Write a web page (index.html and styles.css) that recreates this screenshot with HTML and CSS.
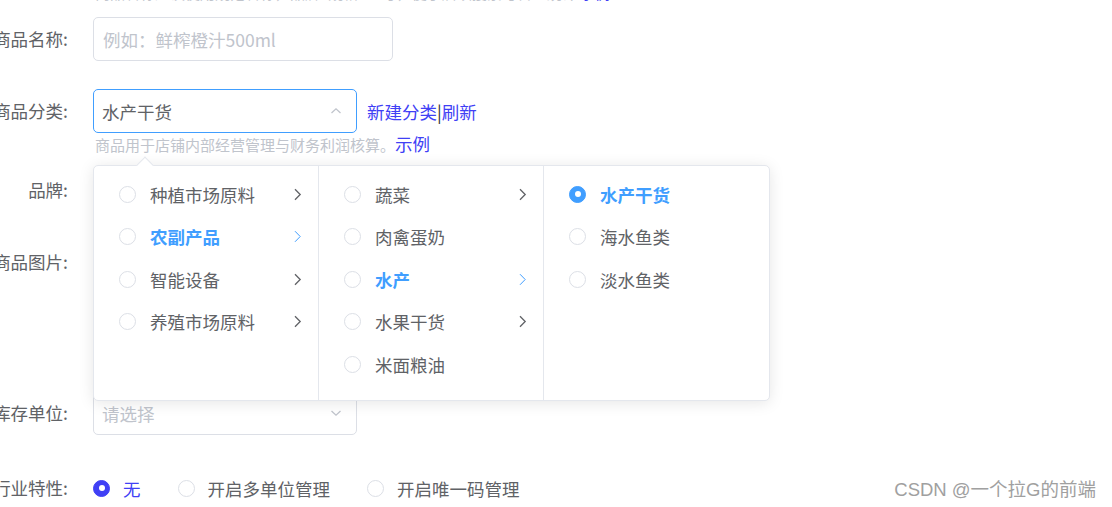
FILE: index.html
```html
<!DOCTYPE html>
<html lang="zh-CN">
<head>
    <meta charset="UTF-8">
    <meta name="viewport" content="width=device-width, initial-scale=1.0">
    <title>新建商品</title>
    <link rel="stylesheet" href="styles.css">
</head>
<body>
    <div class="page">
        <p class="top-tip">商品名称建议使用规范名称，品牌+规格+型号，便于后续搜索与管理统计 <a href="#">示例</a></p>

        <form class="goods-form">
            <div class="form-item">
                <label class="form-label">商品名称:</label>
                <div class="form-content">
                    <input class="input input-name" type="text" placeholder="例如：鲜榨橙汁500ml">
                </div>
            </div>

            <div class="form-item item-category">
                <label class="form-label">商品分类:</label>
                <div class="form-content">
                    <div class="category-line">
                        <div class="select is-focus">
                            <span class="select-value">水产干货</span>
                            <svg class="select-arrow" width="12" height="12" viewBox="0 0 12 12"><path d="M1.5 8 L6 3.8 L10.5 8" fill="none" stroke="#c0c4cc" stroke-width="1.3"/></svg>
                        </div>
                        <span class="links"><a href="#">新建分类</a>|<a href="#">刷新</a></span>
                    </div>
                    <div class="hint">商品用于店铺内部经营管理与财务利润核算。<a href="#">示例</a></div>

                    <!-- cascader dropdown -->
                    <div class="cascader">
                        <span class="popper-arrow"></span>
                        <ul class="menu">
                            <li class="menu-item"><span class="radio"></span><span class="label">种植市场原料</span><svg class="chev" width="9" height="13" viewBox="0 0 9 13"><path d="M2 1.2 L7.2 6.5 L2 11.8" /></svg></li>
                            <li class="menu-item is-active"><span class="radio"></span><span class="label">农副产品</span><svg class="chev" width="9" height="13" viewBox="0 0 9 13"><path d="M2 1.2 L7.2 6.5 L2 11.8" /></svg></li>
                            <li class="menu-item"><span class="radio"></span><span class="label">智能设备</span><svg class="chev" width="9" height="13" viewBox="0 0 9 13"><path d="M2 1.2 L7.2 6.5 L2 11.8" /></svg></li>
                            <li class="menu-item"><span class="radio"></span><span class="label">养殖市场原料</span><svg class="chev" width="9" height="13" viewBox="0 0 9 13"><path d="M2 1.2 L7.2 6.5 L2 11.8" /></svg></li>
                        </ul>
                        <ul class="menu">
                            <li class="menu-item"><span class="radio"></span><span class="label">蔬菜</span><svg class="chev" width="9" height="13" viewBox="0 0 9 13"><path d="M2 1.2 L7.2 6.5 L2 11.8" /></svg></li>
                            <li class="menu-item"><span class="radio"></span><span class="label">肉禽蛋奶</span></li>
                            <li class="menu-item is-active"><span class="radio"></span><span class="label">水产</span><svg class="chev" width="9" height="13" viewBox="0 0 9 13"><path d="M2 1.2 L7.2 6.5 L2 11.8" /></svg></li>
                            <li class="menu-item"><span class="radio"></span><span class="label">水果干货</span><svg class="chev" width="9" height="13" viewBox="0 0 9 13"><path d="M2 1.2 L7.2 6.5 L2 11.8" /></svg></li>
                            <li class="menu-item"><span class="radio"></span><span class="label">米面粮油</span></li>
                        </ul>
                        <ul class="menu">
                            <li class="menu-item is-active"><span class="radio is-checked"></span><span class="label">水产干货</span></li>
                            <li class="menu-item"><span class="radio"></span><span class="label">海水鱼类</span></li>
                            <li class="menu-item"><span class="radio"></span><span class="label">淡水鱼类</span></li>
                        </ul>
                    </div>
                </div>
            </div>

            <div class="form-item">
                <label class="form-label">品牌:</label>
                <div class="form-content">
                    <div class="select"><span class="select-placeholder">请选择</span></div>
                </div>
            </div>

            <div class="form-item">
                <label class="form-label">商品图片:</label>
                <div class="form-content">
                    <div class="upload-box">+</div>
                </div>
            </div>

            <div class="form-item">
                <label class="form-label">库存单位:</label>
                <div class="form-content">
                    <div class="select">
                        <span class="select-placeholder">请选择</span>
                        <svg class="select-arrow" width="12" height="12" viewBox="0 0 12 12"><path d="M1.5 4 L6 8.2 L10.5 4" fill="none" stroke="#c0c4cc" stroke-width="1.3"/></svg>
                    </div>
                </div>
            </div>

            <div class="form-item item-industry">
                <label class="form-label">行业特性:</label>
                <div class="form-content radio-group">
                    <label class="radio-option is-checked"><span class="radio"></span>无</label>
                    <label class="radio-option"><span class="radio"></span>开启多单位管理</label>
                    <label class="radio-option"><span class="radio"></span>开启唯一码管理</label>
                </div>
                <div class="watermark">CSDN @一个拉G的前端</div>
            </div>
        </form>
    </div>
</body>
</html>
```

FILE: styles.css
```css
* {
    margin: 0;
    padding: 0;
    box-sizing: border-box;
}

body {
    background: #fff;
    font-family: "Microsoft YaHei", "Noto Sans CJK SC", "Noto Sans", sans-serif;
    color: #606266;
    overflow: hidden;
}

a {
    color: #4040f5;
    text-decoration: none;
}

.page {
    padding-top: 1px;
}

.top-tip {
    margin-top: -18px;
    padding-left: 95px;
    font-size: 15px;
    line-height: 20px;
    color: #c0c4cc;
}

.goods-form {
    margin-left: -40px;
    padding-top: 14px;
}

.form-item {
    display: flex;
    margin-bottom: 28px;
}

.form-label {
    width: 133px;
    padding-right: 25px;
    text-align: right;
    font-size: 17.5px;
    line-height: 44px;
    color: #606266;
    flex-shrink: 0;
}

.form-content {
    position: relative;
    font-size: 17.5px;
}

.input {
    height: 44px;
    border: 1px solid #dcdfe6;
    border-radius: 5px;
    padding: 0 9px;
    font-size: 17.5px;
    font-family: inherit;
    color: #606266;
    outline: none;
}

.input::placeholder {
    color: #c0c4cc;
}

.input-name {
    width: 300px;
}

.category-line {
    display: flex;
    align-items: center;
}

.select {
    width: 264px;
    height: 44px;
    border: 1px solid #dcdfe6;
    border-radius: 5px;
    padding: 0 8px;
    display: flex;
    align-items: center;
    justify-content: space-between;
}

.select.is-focus {
    border-color: #409eff;
}

.select-value {
    color: #606266;
}

.select-placeholder {
    color: #c0c4cc;
}

.select-arrow {
    margin-right: 6px;
}

.links {
    margin-left: 10px;
    color: #303133;
}

.hint {
    font-size: 15px;
    line-height: 22px;
    color: #c0c4cc;
    padding-left: 2px;
}

.hint a {
    font-size: 17.5px;
}

.item-category {
    margin-bottom: 12px;
}

.upload-box {
    width: 123px;
    height: 123px;
    border: 1px dashed #dcdfe6;
    border-radius: 6px;
    color: #8c939d;
    font-size: 28px;
    display: flex;
    align-items: center;
    justify-content: center;
}

/* cascader dropdown */
.cascader {
    position: absolute;
    top: 76px;
    left: 0;
    z-index: 10;
    display: flex;
    height: 236px;
    background: #fff;
    border: 1px solid #e4e7ed;
    border-radius: 5px;
    box-shadow: 0 2px 15px rgba(0, 0, 0, 0.1);
}

.popper-arrow {
    position: absolute;
    top: -7px;
    left: 45px;
    width: 12px;
    height: 12px;
    background: #fff;
    border-top: 1px solid #e4e7ed;
    border-left: 1px solid #e4e7ed;
    transform: rotate(45deg);
}

.menu {
    list-style: none;
    width: 225px;
    padding-top: 7px;
    border-right: 1px solid #e4e7ed;
}

.menu:last-child {
    border-right: none;
}

.menu-item {
    display: flex;
    align-items: center;
    height: 42.5px;
    padding: 0 16px 0 25px;
    color: #606266;
    font-size: 17.5px;
}

.menu-item .label {
    flex: 1;
    margin-left: 14px;
}

.menu-item.is-active {
    color: #409eff;
    font-weight: bold;
}

.chev path {
    fill: none;
    stroke: currentColor;
    stroke-width: 1.3;
}

.menu-item.is-active .chev path {
    stroke-width: 1;
}

.radio {
    display: inline-block;
    width: 17px;
    height: 17px;
    border: 1px solid #dcdfe6;
    border-radius: 50%;
    background: #fff;
    flex-shrink: 0;
    position: relative;
}

.radio.is-checked {
    background: #409eff;
    border-color: #409eff;
}

.radio.is-checked::after,
.radio-option.is-checked .radio::after {
    content: "";
    position: absolute;
    left: 50%;
    top: 50%;
    width: 6px;
    height: 6px;
    margin: -3px 0 0 -3px;
    border-radius: 50%;
    background: #fff;
}

/* bottom radios */
.item-industry {
    padding-top: 7px;
    margin-bottom: 0;
    align-items: center;
    padding-right: 16px;
}

.item-industry .form-label {
    line-height: 36px;
}

.radio-group {
    display: flex;
    align-items: center;
    height: 36px;
}

.radio-option {
    display: flex;
    align-items: center;
    margin-right: 37px;
    color: #606266;
}

.radio-option .radio {
    margin-right: 13px;
}

.radio-option.is-checked {
    color: #4040f5;
}

.radio-option.is-checked .radio {
    background: #4040f5;
    border-color: #4040f5;
}

.watermark {
    margin-left: auto;
    font-size: 18.5px;
    color: #a0a0a0;
    font-family: "Liberation Sans", "Noto Sans CJK SC", sans-serif;
}
```
